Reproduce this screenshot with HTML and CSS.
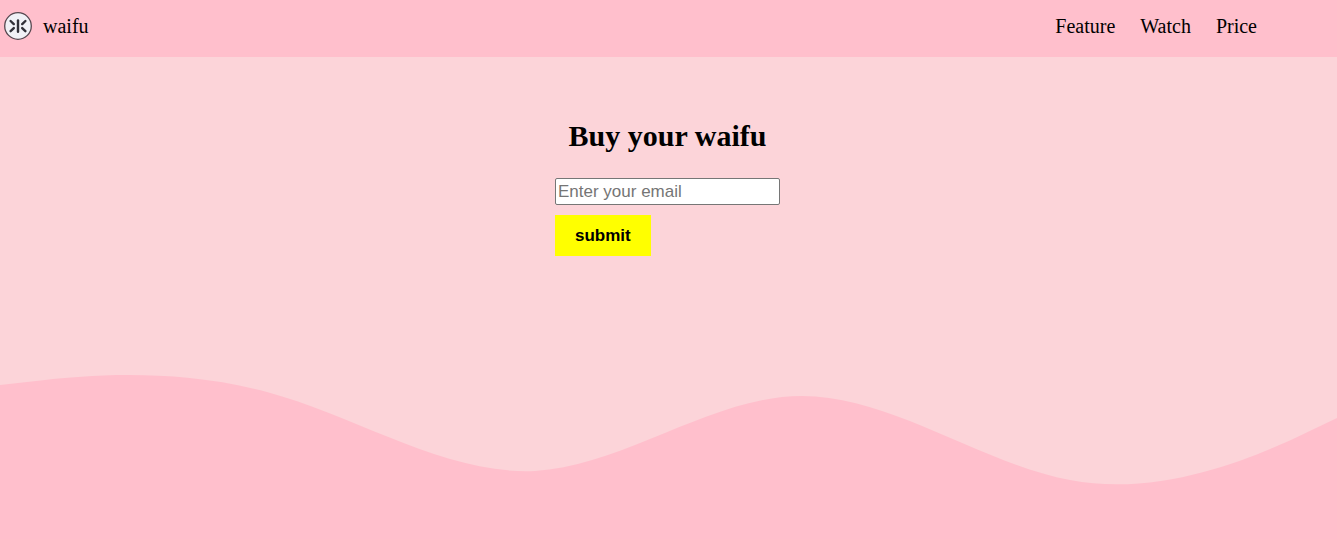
FILE: index.html
```html
<!DOCTYPE html>
<html lang="en">
<head>
  <meta charset="utf-8">
  <meta name="viewport" content="width=device-width, initial-scale=1">
  <title>waifu</title>
  <link rel="stylesheet" href="styles.css">
</head>
<body>
  <header class="header">
    <div class="brand">
      <svg class="brand-logo" viewBox="0 0 28 28" aria-hidden="true">
        <circle cx="14" cy="14" r="13.3" fill="#f0f1f6" stroke="#55474f" stroke-width="1.3"/>
        <g stroke="#303038" stroke-width="2.4" stroke-linecap="round" fill="none">
          <path d="M14 8.4V19.8"/>
          <path d="M6.6 9L9.8 12.1M6.6 19.2L9.8 16.1"/>
          <path d="M21.4 9L18.2 12.1M21.4 19.2L18.2 16.1"/>
        </g>
      </svg>
      <span>waifu</span>
    </div>
    <nav class="nav">
      <a href="#feature">Feature</a>
      <a href="#watch">Watch</a>
      <a href="#price">Price</a>
    </nav>
  </header>
  <main class="hero">
    <h1 class="title">Buy your waifu</h1>
    <form class="form">
      <input class="email" type="email" placeholder="Enter your email" aria-label="Email">
      <button class="submit" type="submit">submit</button>
    </form>
  </main>
  <svg class="wave" viewBox="0 370 1337 169" preserveAspectRatio="none" aria-hidden="true">
    <path fill="#ffbfcc" d="M0 385L45 380C89 375 178 368 267 392C356 416 446 475 535 471C624 466 713 396 802 396C891 396 981 463.5 1070 480C1159 497 1248 459 1292 439.5L1337 418V539H0Z"/>
  </svg>
</body>
</html>
```
FILE: styles.css
```css
* {
  box-sizing: border-box;
}

body {
  display: flex;
  flex-direction: column;
  min-height: 100vh;
  margin: 0;
  background: #fcd4d9;
  color: #000;
  font-family: "Liberation Serif", "Times New Roman", serif;
  font-size: 20px;
}

.header {
  display: flex;
  align-items: center;
  justify-content: space-between;
  padding: 12px 80px 17px 4px;
  background: #ffbfcc;
  line-height: 28px;
}

.brand {
  display: flex;
  align-items: center;
  gap: 11px;
}

.brand-logo {
  width: 28px;
  height: 28px;
}

.nav {
  display: flex;
  gap: 25px;
}

.nav a {
  color: inherit;
  text-decoration: none;
}

.hero {
  display: flex;
  flex-direction: column;
  align-items: center;
  padding: 62px 17px 24px 15px;
}

.title {
  margin: 0 0 25px;
  font-size: 30px;
  line-height: 34px;
}

.form {
  display: flex;
  flex-direction: column;
  align-items: flex-start;
  gap: 10px;
  width: 225px;
}

.email,
.submit {
  font-family: "Liberation Sans", Arial, sans-serif;
  font-size: 17px;
}

.email {
  width: 100%;
  height: 27px;
  padding: 1px 2px;
  border: 1px solid #767676;
  border-radius: 2px;
  background: #fff;
}

.email::placeholder {
  color: #757575;
}

.submit {
  padding: 10px 20px;
  border: 0;
  background: #ff0;
  color: #000;
  font-weight: bold;
  line-height: 21px;
}

.wave {
  display: block;
  width: 100%;
  height: 169px;
  margin-top: auto;
}
```
